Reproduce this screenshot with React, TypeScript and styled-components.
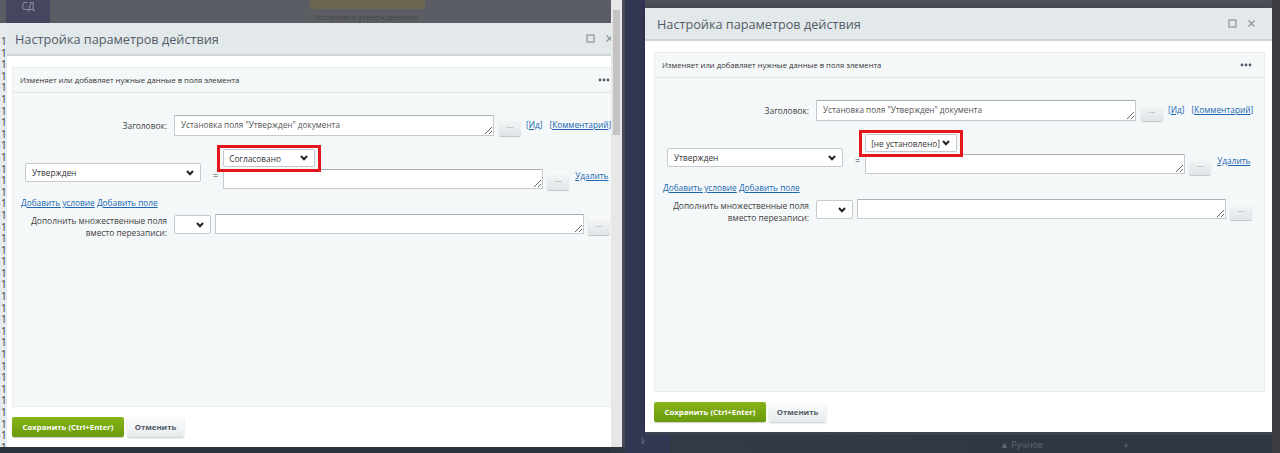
import React from "react";
import styled, { createGlobalStyle } from "styled-components";

const GlobalStyle = createGlobalStyle`
  html, body { margin: 0; padding: 0; background: #2f3742; }
  body { font-family: "Open Sans", "Liberation Sans", sans-serif; }
  * { box-sizing: border-box; }
`;

const Chevron = () => (
  <svg width="8" height="6" viewBox="0 0 8 6">
    <polyline points="1,1 4,4.2 7,1" fill="none" stroke="#222" strokeWidth="2" />
  </svg>
);

const MoreDots = () => (
  <svg width="12" height="4" viewBox="0 0 12 4">
    <circle cx="2" cy="2" r="1.4" fill="#535c69" />
    <circle cx="6" cy="2" r="1.4" fill="#535c69" />
    <circle cx="10" cy="2" r="1.4" fill="#535c69" />
  </svg>
);

const ActionDialog: React.FC<{ value: string }> = ({ value }) => (
  <Dialog>
    <DialogHeader>
      <Title>Настройка параметров действия</Title>
      <HeaderIcons>
        <svg width="9" height="9" viewBox="0 0 9 9">
          <rect x="1" y="1" width="7" height="7" fill="none" stroke="#8d949b" strokeWidth="1.2" />
        </svg>
        <svg width="9" height="9" viewBox="0 0 9 9">
          <path d="M1.5 1.5 L7.5 7.5 M7.5 1.5 L1.5 7.5" stroke="#8d949b" strokeWidth="1.3" />
        </svg>
      </HeaderIcons>
    </DialogHeader>
    <DialogBody>
      <Panel>
        <PanelHead>
          <span>Изменяет или добавляет нужные данные в поля элемента</span>
          <MoreDots />
        </PanelHead>
        <PanelBody>
          <TitleRow>
            <Label>Заголовок:</Label>
            <TextArea $w={320} $h={21} readOnly value={'Установка поля "Утвержден" документа'} />
            <DotsButton>...</DotsButton>
            <LinkGroup>
              <Link>[<u>Ид</u>]</Link>
              <Link>[<u>Комментарий</u>]</Link>
            </LinkGroup>
          </TitleRow>

          <FieldRow>
            <FieldSelect $w={176}>
              <span>Утвержден</span>
              <Chevron />
            </FieldSelect>
            <Eq>=</Eq>
            <ValueCol>
              <ValueSelect $w={92} $h={18}>
                <span>{value}</span>
                <Chevron />
              </ValueSelect>
              <InlineRow>
                <TextArea $w={320} $h={20} readOnly value="" />
                <DotsButton>...</DotsButton>
                <RemoveLink>Удалить</RemoveLink>
              </InlineRow>
            </ValueCol>
          </FieldRow>

          <AddLinks>
            <Link><u>Добавить условие</u></Link> <Link><u>Добавить поле</u></Link>
          </AddLinks>

          <MultiRow>
            <MultiLabel>
              Дополнить множественные поля
              <br />
              вместо перезаписи:
            </MultiLabel>
            <SmallSelect $w={37}>
              <Chevron />
            </SmallSelect>
            <TextArea $w={369} $h={20} readOnly value="" />
            <DotsButton>...</DotsButton>
          </MultiRow>
        </PanelBody>
      </Panel>
    </DialogBody>
    <Footer>
      <SaveButton>Сохранить (Ctrl+Enter)</SaveButton>
      <CancelButton>Отменить</CancelButton>
    </Footer>
  </Dialog>
);

const gutterRows = Array.from({ length: 38 }, () => "1").join("\n");

export default function App() {
  return (
    <>
      <GlobalStyle />
      <Page>
        <LeftScreen>
          <LeftMain>
            <TopStrip>
              <Tile>СД</Tile>
              <FadedCard>
                <FadedBar />
                <FadedText>Установка утвержденного</FadedText>
              </FadedCard>
            </TopStrip>
            <LeftBody>
              <Gutter>{gutterRows}</Gutter>
              <Clip>
                <ActionDialog value="Согласовано" />
              </Clip>
            </LeftBody>
            <BottomStrip />
          </LeftMain>
          <Scrollbar>
            <Thumb />
          </Scrollbar>
        </LeftScreen>

        <NavyStrip>
          <NavyText>Из</NavyText>
        </NavyStrip>

        <RightCol>
          <RightTop />
          <ActionDialog value="[не установлено]" />
          <RightBottom>
            <BottomItem>▲ Ручное</BottomItem>
            <BottomPlus>+</BottomPlus>
          </RightBottom>
        </RightCol>
        <RightEdge />
      </Page>
    </>
  );
}

/* ---------- page / backdrop ---------- */

const Page = styled.div`
  display: flex;
  width: 1280px;
  height: 453px;
  overflow: hidden;
  background: #2f3742;
`;

const LeftScreen = styled.div`
  display: flex;
  width: 625px;
  height: 453px;
  flex-shrink: 0;
`;

const LeftMain = styled.div`
  display: flex;
  flex-direction: column;
  width: 611px;
  background: #5a5e65;
`;

const TopStrip = styled.div`
  display: flex;
  align-items: flex-start;
  height: 23px;
  background: #5a5d64;
`;

const Tile = styled.div`
  width: 44px;
  height: 23px;
  margin-left: 6px;
  background: #46465e;
  color: #9597ac;
  font-size: 10px;
  line-height: 12px;
  text-align: center;
`;

const FadedCard = styled.div`
  display: flex;
  flex-direction: column;
  width: 115px;
  height: 23px;
  margin-left: 260px;
  background: #5c5d62;
`;

const FadedBar = styled.div`
  height: 9px;
  background: #6c6552;
`;

const FadedText = styled.div`
  padding: 2px 0 0 6px;
  font-size: 8px;
  color: #44464c;
  white-space: nowrap;
  overflow: hidden;
`;

const LeftBody = styled.div`
  display: flex;
  height: 424px;
`;

const Gutter = styled.div`
  width: 7px;
  flex-shrink: 0;
  overflow: hidden;
  background: #e8ebed;
  color: #3a3a3a;
  font-size: 10px;
  line-height: 11.6px;
  padding: 13px 0 0 1px;
  white-space: pre;
`;

const Clip = styled.div`
  width: 604px;
  overflow: hidden;
  display: flex;
  & > * {
    margin-left: -4px;
  }
`;

const BottomStrip = styled.div`
  height: 6px;
  background: #2b323c;
`;

const Scrollbar = styled.div`
  width: 14px;
  height: 447px;
  padding: 10px 2px 0 2px;
  background: #e7e7e7;
  border-right: 3px solid #4a4c55;
`;

const Thumb = styled.div`
  height: 125px;
  background: #c3c3c3;
`;

const NavyStrip = styled.div`
  display: flex;
  flex-direction: column;
  justify-content: flex-end;
  width: 20px;
  flex-shrink: 0;
  background: #343754;
`;

const NavyText = styled.div`
  padding: 0 0 6px 16px;
  font-size: 9px;
  color: #6a6d86;
  white-space: nowrap;
`;

const RightCol = styled.div`
  display: flex;
  flex-direction: column;
  width: 627px;
  flex-shrink: 0;
`;

const RightTop = styled.div`
  height: 8px;
  background: #4c4f56;
`;

const RightBottom = styled.div`
  display: flex;
  align-items: center;
  height: 21px;
  padding-left: 355px;
  background: linear-gradient(90deg, #343754 0 25px, #323b46 25px, #2e3640);
  border-top: 3px solid #3a4350;
`;

const BottomItem = styled.div`
  font-size: 9px;
  color: #5f6b78;
`;

const BottomPlus = styled.div`
  margin-left: 80px;
  font-size: 11px;
  color: #5f6b78;
`;

const RightEdge = styled.div`
  flex: 1;
  background: #3b3d42;
`;

/* ---------- dialog ---------- */

const Dialog = styled.div`
  display: flex;
  flex-direction: column;
  width: 627px;
  height: 424px;
  flex-shrink: 0;
  background: #fff;
  box-shadow: 0 0 6px rgba(0, 0, 0, 0.25);
`;

const DialogHeader = styled.div`
  display: flex;
  align-items: center;
  height: 33px;
  padding: 0 16px 0 12px;
  background: #e3e9eb;
  border-bottom: 2px solid #cdd4d8;
`;

const Title = styled.div`
  flex: 1;
  font-size: 12.7px;
  color: #535c69;
  white-space: nowrap;
`;

const HeaderIcons = styled.div`
  display: flex;
  align-items: center;
  gap: 10px;
`;

const DialogBody = styled.div`
  padding: 11px 7px 0 9px;
`;

const Panel = styled.div`
  height: 340px;
  background: #f5f8f9;
  border: 1px solid #e8edee;
`;

const PanelHead = styled.div`
  display: flex;
  align-items: center;
  justify-content: space-between;
  height: 25px;
  padding: 0 12px 0 7px;
  border-bottom: 1px solid #e0e6e8;
  font-size: 7.7px;
  color: #333;
  white-space: nowrap;
`;

const PanelBody = styled.div`
  padding-top: 22px;
`;

const Label = styled.div`
  width: 154px;
  margin-right: 7px;
  text-align: right;
  font-size: 8.4px;
  color: #3f3f3f;
  align-self: center;
  white-space: nowrap;
`;

const TitleRow = styled.div`
  display: flex;
  align-items: flex-start;
`;

const TextArea = styled.textarea<{ $w: number; $h: number }>`
  display: block;
  width: ${(p) => p.$w}px;
  height: ${(p) => p.$h}px;
  min-height: ${(p) => p.$h}px;
  margin: 0;
  padding: 3px 6px 0;
  border: 1px solid #c4cad0;
  border-top-color: #a8afb5;
  border-radius: 1px;
  background: #fff;
  font-family: "Open Sans", "Liberation Sans", sans-serif;
  font-size: 8.2px;
  color: #555;
  resize: both;
  overflow: hidden;
  outline: none;
`;

const DotsButton = styled.button`
  width: 22px;
  height: 19px;
  margin: 2px 0 0 5px;
  padding: 0 0 5px;
  border: none;
  border-radius: 2px;
  background: linear-gradient(#f9fafb, #dfe4e6);
  box-shadow: 0 1px 1px rgba(0, 0, 0, 0.22);
  font-family: "Open Sans", sans-serif;
  font-size: 8px;
  color: #7b8389;
  flex-shrink: 0;
`;

const LinkGroup = styled.div`
  display: flex;
  gap: 7px;
  margin: 4px 0 0 5px;
  font-size: 8.3px;
`;

const Link = styled.span`
  color: #2067b0;
  white-space: nowrap;
  & u {
    text-decoration-thickness: 1px;
  }
`;

const FieldRow = styled.div`
  display: flex;
  align-items: flex-start;
  margin-top: 13px;
  padding-left: 12px;
`;

const SelectBox = styled.div<{ $w: number; $h?: number }>`
  display: flex;
  align-items: center;
  justify-content: space-between;
  width: ${(p) => p.$w}px;
  height: ${(p) => p.$h ?? 19}px;
  padding: 0 6px 0 6px;
  background: #fff;
  border: 1px solid #c4cad0;
  border-radius: 2px;
  font-size: 8.3px;
  color: #333;
  white-space: nowrap;
  flex-shrink: 0;
`;

const FieldSelect = styled(SelectBox)`
  margin-top: 14px;
`;

const ValueSelect = styled(SelectBox)`
  position: relative;
  padding: 0 6px 0 5px;
  &::after {
    content: "";
    position: absolute;
    top: -5px;
    left: -7px;
    right: -7px;
    bottom: -6px;
    border: 3px solid #e3161c;
    z-index: 1;
    pointer-events: none;
  }
`;

const SmallSelect = styled(SelectBox)`
  margin: 1px 4px 0 0;
  justify-content: flex-end;
`;

const Eq = styled.div`
  margin: 20px 0 0 12px;
  font-size: 9px;
  color: #444;
`;

const ValueCol = styled.div`
  display: flex;
  flex-direction: column;
  gap: 2px;
  margin-left: 5px;
`;

const InlineRow = styled.div`
  display: flex;
  align-items: flex-start;
  & > ${DotsButton} {
    margin-left: 4px;
  }
`;

const RemoveLink = styled.span`
  margin: 1px 0 0 6px;
  font-size: 8.3px;
  color: #2067b0;
  text-decoration: underline;
`;

const AddLinks = styled.div`
  margin-top: 7px;
  padding-left: 8px;
  font-size: 8.3px;
  line-height: 12px;
`;

const MultiRow = styled.div`
  display: flex;
  align-items: flex-start;
  margin-top: 5px;
  & > ${DotsButton} {
    margin-left: 4px;
  }
`;

const MultiLabel = styled.div`
  width: 154px;
  margin-right: 7px;
  padding-top: 1px;
  text-align: right;
  font-size: 8.4px;
  line-height: 12px;
  color: #3f3f3f;
  white-space: nowrap;
`;

const Footer = styled.div`
  display: flex;
  gap: 3px;
  padding: 10px 9px;
`;

const SaveButton = styled.button`
  width: 112px;
  height: 20px;
  padding: 0;
  border: none;
  border-radius: 2px;
  background: linear-gradient(#86b418, #6a9a0b);
  box-shadow: 0 1px 1px rgba(0, 0, 0, 0.2);
  font-family: "Open Sans", sans-serif;
  font-size: 7.8px;
  font-weight: 700;
  color: #fff;
`;

const CancelButton = styled.button`
  width: 57px;
  height: 20px;
  padding: 0;
  border: none;
  border-radius: 2px;
  background: linear-gradient(#fdfdfd, #e6ebed);
  box-shadow: 0 1px 2px rgba(0, 0, 0, 0.22);
  font-family: "Open Sans", sans-serif;
  font-size: 7.8px;
  font-weight: 700;
  color: #535c69;
`;
